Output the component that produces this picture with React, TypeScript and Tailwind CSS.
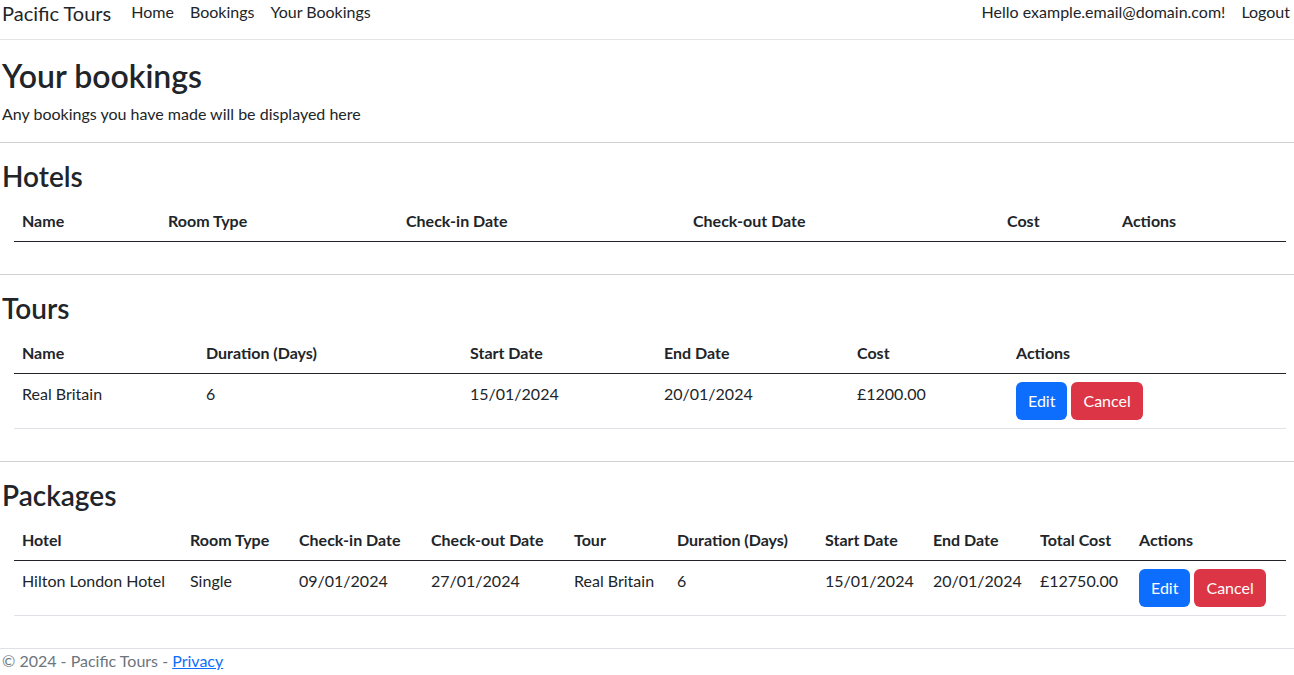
import React from "react";

type Column = { label: string; width: string };

const hotelColumns: Column[] = [
  { label: "Name", width: "w-[146px]" },
  { label: "Room Type", width: "w-[238px]" },
  { label: "Check-in Date", width: "w-[287px]" },
  { label: "Check-out Date", width: "w-[314px]" },
  { label: "Cost", width: "w-[115px]" },
  { label: "Actions", width: "w-[172px]" },
];

const tourColumns: Column[] = [
  { label: "Name", width: "w-[184px]" },
  { label: "Duration (Days)", width: "w-[264px]" },
  { label: "Start Date", width: "w-[194px]" },
  { label: "End Date", width: "w-[193px]" },
  { label: "Cost", width: "w-[159px]" },
  { label: "Actions", width: "w-[278px]" },
];

const packageColumns: Column[] = [
  { label: "Hotel", width: "w-[168px]" },
  { label: "Room Type", width: "w-[109px]" },
  { label: "Check-in Date", width: "w-[132px]" },
  { label: "Check-out Date", width: "w-[143px]" },
  { label: "Tour", width: "w-[103px]" },
  { label: "Duration (Days)", width: "w-[148px]" },
  { label: "Start Date", width: "w-[108px]" },
  { label: "End Date", width: "w-[107px]" },
  { label: "Total Cost", width: "w-[99px]" },
  { label: "Actions", width: "w-[155px]" },
];

const tourRows = [["Real Britain", "6", "15/01/2024", "20/01/2024", "£1200.00"]];

const packageRows = [
  [
    "Hilton London Hotel",
    "Single",
    "09/01/2024",
    "27/01/2024",
    "Real Britain",
    "6",
    "15/01/2024",
    "20/01/2024",
    "£12750.00",
  ],
];

/**
 * Edit / Cancel pair shown in the last column
 */
const ActionButtons: React.FC = () => (
  <div className="flex gap-[4px]">
    <button className="h-[38px] px-3 rounded-[6px] bg-[#0d6efd] text-white text-[16px] leading-6">
      Edit
    </button>
    <button className="h-[38px] px-3 rounded-[6px] bg-[#dc3545] text-white text-[16px] leading-6">
      Cancel
    </button>
  </div>
);

const BookingTable: React.FC<{ columns: Column[]; rows: string[][] }> = ({
  columns,
  rows,
}) => (
  <div className="px-[14px]">
    <table className="w-full table-fixed border-collapse">
      <thead>
        <tr className="border-b border-[#212529]">
          {columns.map((c) => (
            <th
              key={c.label}
              className={`${c.width} text-left font-bold px-2 py-2 leading-6 align-top`}
            >
              {c.label}
            </th>
          ))}
        </tr>
      </thead>
      <tbody>
        {rows.map((row, i) => (
          <tr key={i} className="border-b border-[#dee2e6]">
            {row.map((cell, j) => (
              <td key={j} className="px-2 py-2 leading-6 align-top whitespace-nowrap">
                {cell}
              </td>
            ))}
            <td className="px-2 py-2 align-top">
              <ActionButtons />
            </td>
          </tr>
        ))}
      </tbody>
    </table>
  </div>
);

const Section: React.FC<{ title: string; children: React.ReactNode }> = ({
  title,
  children,
}) => (
  <section>
    <h2 className="text-[28px] leading-[34px] font-semibold mt-4 mb-2 px-[2px]">{title}</h2>
    {children}
  </section>
);

export default function App() {
  return (
    <div
      className="min-h-screen bg-white text-[#212529] text-[16px]"
      style={{ fontFamily: "Lato, 'Noto Sans', sans-serif" }}
    >
      {/* Navbar */}
      <nav className="h-[40px] border-b border-[#e5e5e5] flex items-start justify-between px-[2px]">
        <div className="flex items-start">
          <span className="text-[20px] leading-[26px] mr-[20px]">Pacific Tours</span>
          <div className="flex gap-4 text-[16px] leading-6 text-[#212529]">
            <a>Home</a>
            <a>Bookings</a>
            <a>Your Bookings</a>
          </div>
        </div>
        <div className="flex gap-4 text-[16px] leading-6 pr-[2px]">
          <span>Hello example.email@domain.com!</span>
          <a>Logout</a>
        </div>
      </nav>

      <main>
        <div className="px-[2px]">
          <h1 className="text-[32px] leading-[38px] font-semibold mt-[17px] mb-[7px]">
            Your bookings
          </h1>
          <p className="leading-6 mb-4">Any bookings you have made will be displayed here</p>
        </div>
        <hr className="border-t border-[#cfd0d2]" />

        <Section title="Hotels">
          <BookingTable columns={hotelColumns} rows={[]} />
        </Section>
        <hr className="border-t border-[#cfd0d2] mt-8" />

        <Section title="Tours">
          <BookingTable columns={tourColumns} rows={tourRows} />
        </Section>
        <hr className="border-t border-[#cfd0d2] mt-8" />

        <Section title="Packages">
          <BookingTable columns={packageColumns} rows={packageRows} />
        </Section>
      </main>

      <footer className="mt-8 border-t border-[#dee2e6] px-[2px] leading-6 text-[#6c757d]">
        © 2024 - Pacific Tours - <a className="text-[#0d6efd] underline">Privacy</a>
      </footer>
    </div>
  );
}
